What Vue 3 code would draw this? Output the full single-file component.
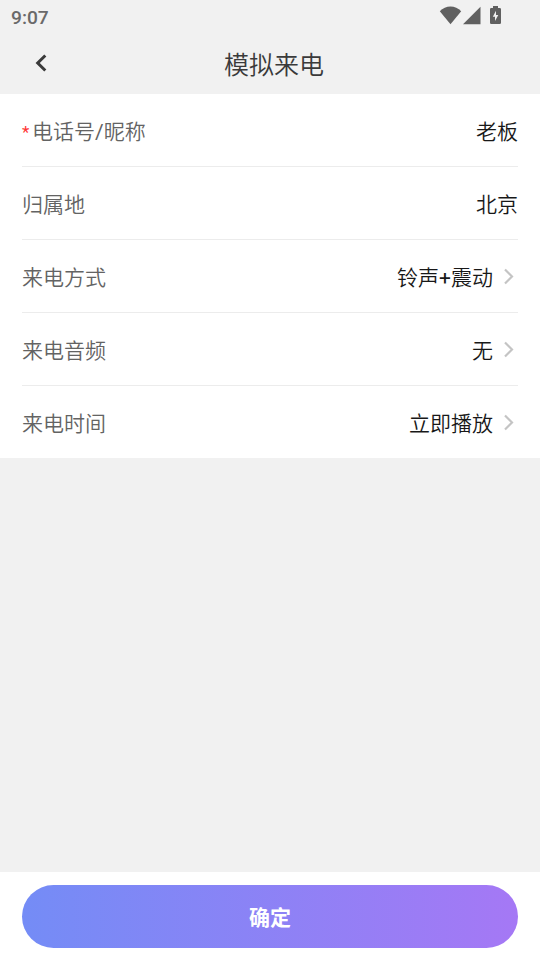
<script setup>
const rows = [
  { label: '电话号/昵称', value: '老板', required: true },
  { label: '归属地', value: '北京' },
  { label: '来电方式', value: '铃声+震动', arrow: true },
  { label: '来电音频', value: '无', arrow: true },
  { label: '来电时间', value: '立即播放', arrow: true },
]
const split = (text) => text.split(/([/+])/)
</script>

<template>
  <div class="screen">
    <div class="status">
      <span class="clock">9:07</span>
      <svg width="64" height="28" viewBox="0 0 64 28" fill="#606060">
        <path d="M1.800 11.300C7.500 5 17.500 5 23.200 11.300L12.500 24.300Z" />
        <path d="M25 24.300L42.500 6.800V24.300Z" />
        <path fill-rule="evenodd" d="M55 6h5v2h1.700a1.300 1.300 0 0 1 1.300 1.300v13.400a1.300 1.300 0 0 1-1.300 1.300h-8.400a1.300 1.300 0 0 1-1.300-1.300V9.300a1.300 1.300 0 0 1 1.300-1.300H55zM58 10.800l-3.200 6H57v4.200l3.300-6H58z" />
      </svg>
    </div>
    <header class="header">
      <button class="back" aria-label="返回">
        <svg width="14" height="20" viewBox="0 0 14 20"><path d="M11.300 2.500L3.700 10l7.600 7.500" fill="none" stroke="#3a3a3a" stroke-width="3" /></svg>
      </button>
      <h1>模拟来电</h1>
    </header>
    <main class="list">
      <div v-for="r in rows" :key="r.label" class="row">
        <span v-if="r.required" class="star">*</span>
        <span class="label"><span v-for="(part, i) in split(r.label)" :key="i" :class="{ symbol: i % 2 }">{{ part }}</span></span>
        <span class="value"><span v-for="(part, i) in split(r.value)" :key="i" :class="{ symbol: i % 2 }">{{ part }}</span></span>
        <svg v-if="r.arrow" class="arrow" width="10" height="18" viewBox="0 0 10 18"><path d="M1 2.500l7 7-7 7" fill="none" stroke="#c4c4c4" stroke-width="2.200" /></svg>
      </div>
    </main>
    <footer class="footer"><button class="confirm">确定</button></footer>
  </div>
</template>

<style>
body { margin: 0; }
</style>
<style scoped>
.screen { height: 960px; display: flex; flex-direction: column; background: #f1f1f1; font-family: Roboto, "Noto Sans CJK SC", sans-serif; }
.status { height: 34px; display: flex; justify-content: space-between; padding: 0 38px 0 11px; box-sizing: border-box; }
.clock { font-size: 19.200px; line-height: 35px; font-weight: 500; color: #6a6a6a; }
.header { height: 60px; display: flex; }
h1 { margin: 0; padding-top: 1px; font-size: 25px; font-weight: 350; line-height: 61px; color: #3a3a3a; }
button { border: 0; padding: 0; background: none; font-family: inherit; }
.back { width: 224px; padding: 0 0 0 34px; text-align: left; }
.list { background: #fff; padding: 0 22px; }
.row { height: 73px; box-sizing: border-box; border-bottom: 1px solid #ececec; display: flex; align-items: center; font-size: 21px; font-weight: 350; }
.row:last-child { height: 72px; border: 0; }
.star { color: #f33; font-size: 17px; font-weight: 400; width: 10px; padding-top: 4px; }
.label { color: #636363; }
.value { margin-left: auto; color: #181818; }
.symbol { font-weight: 400; }
.arrow { margin: 0 4px 0 11px; }
.footer { margin-top: auto; height: 88px; box-sizing: border-box; padding: 13px 22px 12px; background: #fff; }
.confirm { width: 100%; height: 63px; padding-bottom: 2px; border-radius: 32px; background: linear-gradient(90deg, #748cf6, #a578f5); color: #fff; font-size: 21px; font-weight: 700; }
</style>
